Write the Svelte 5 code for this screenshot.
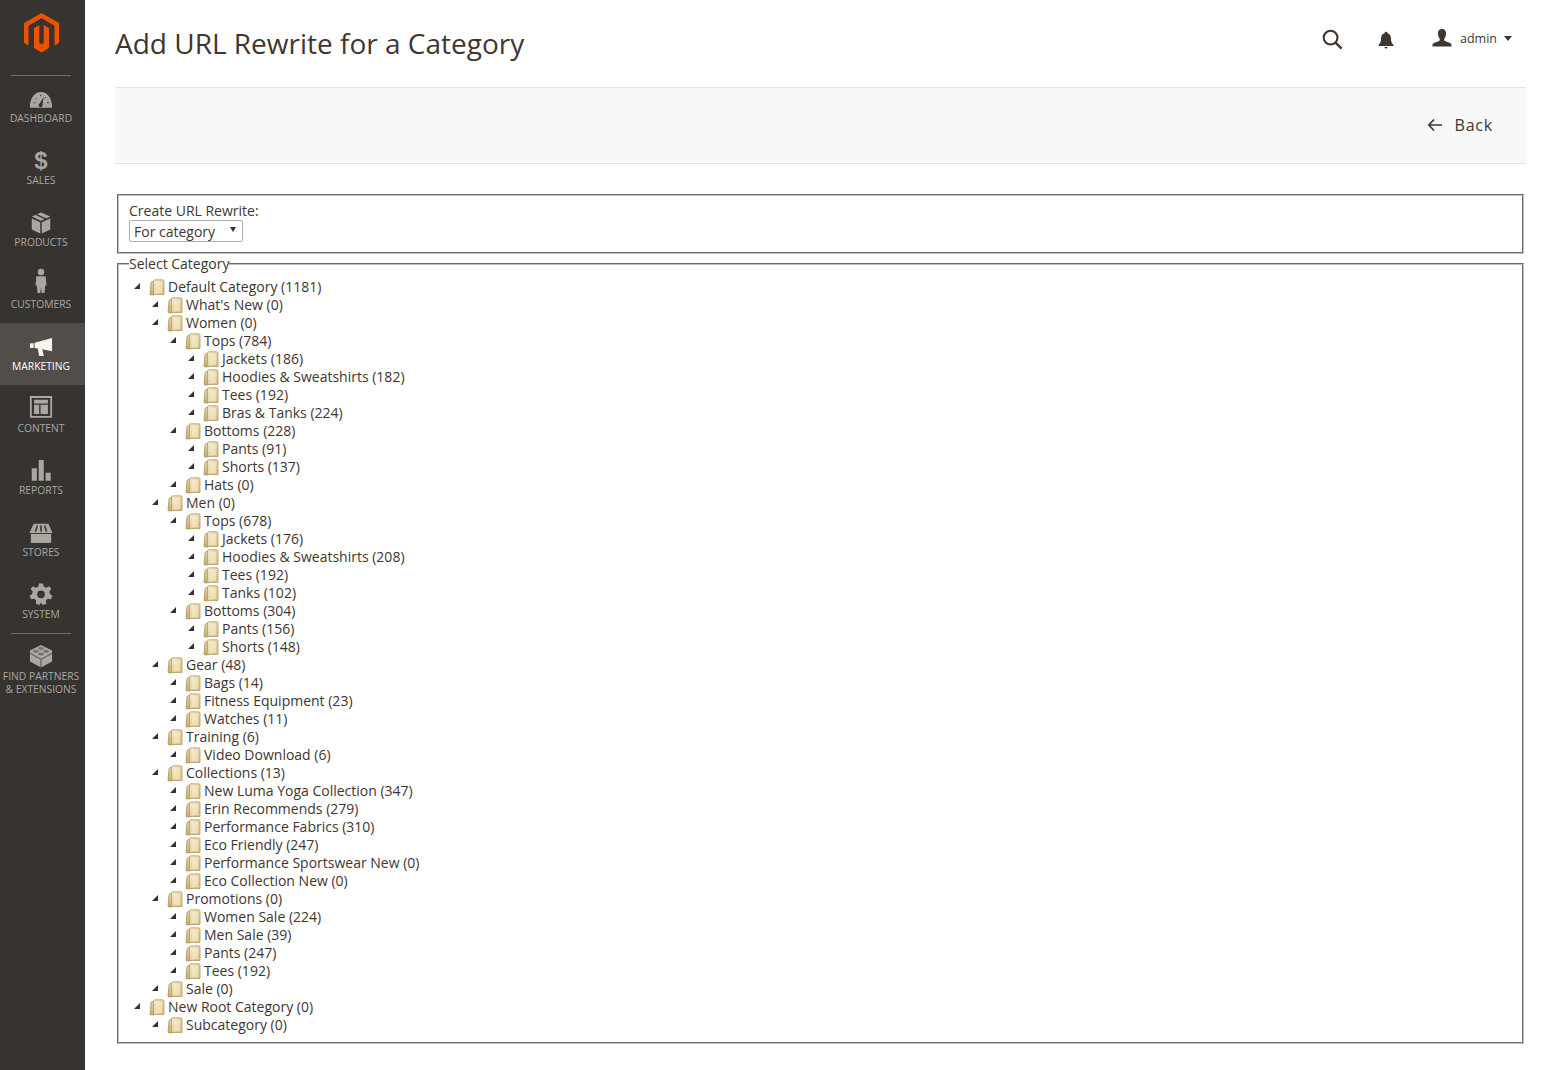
<script>
  const n = (label, ...kids) => ({ label, kids });

  const tree = [
    n('Default Category (1181)',
      n("What's New (0)"),
      n('Women (0)',
        n('Tops (784)', n('Jackets (186)'), n('Hoodies & Sweatshirts (182)'), n('Tees (192)'), n('Bras & Tanks (224)')),
        n('Bottoms (228)', n('Pants (91)'), n('Shorts (137)')),
        n('Hats (0)')),
      n('Men (0)',
        n('Tops (678)', n('Jackets (176)'), n('Hoodies & Sweatshirts (208)'), n('Tees (192)'), n('Tanks (102)')),
        n('Bottoms (304)', n('Pants (156)'), n('Shorts (148)'))),
      n('Gear (48)', n('Bags (14)'), n('Fitness Equipment (23)'), n('Watches (11)')),
      n('Training (6)', n('Video Download (6)')),
      n('Collections (13)',
        n('New Luma Yoga Collection (347)'), n('Erin Recommends (279)'), n('Performance Fabrics (310)'),
        n('Eco Friendly (247)'), n('Performance Sportswear New (0)'), n('Eco Collection New (0)')),
      n('Promotions (0)', n('Women Sale (224)'), n('Men Sale (39)'), n('Pants (247)'), n('Tees (192)')),
      n('Sale (0)')),
    n('New Root Category (0)', n('Subcategory (0)'))
  ];

  const menu = [
    { id: 'dashboard', label: 'Dashboard' },
    { id: 'sales', label: 'Sales' },
    { id: 'products', label: 'Products' },
    { id: 'customers', label: 'Customers' },
    { id: 'marketing', label: 'Marketing', active: true },
    { id: 'content', label: 'Content' },
    { id: 'reports', label: 'Reports' },
    { id: 'stores', label: 'Stores' },
    { id: 'system', label: 'System' }
  ];
</script>

{#snippet icon(id)}
  <svg class="nav-icon" viewBox="0 0 26 26" aria-hidden="true">
    {#if id === 'dashboard'}
      <path fill-rule="evenodd" d="M1 22.5 C1 12 6 5.5 13 5.5 C20 5.5 25 12 25 22.5 Z M16 10.5 L11.8 17.5 A2.2 2.2 0 1 0 14.6 18.6 Z" />
      <path d="M5 17h2M7.5 12l1 1M12.5 8.5v1.5M18.5 11l-1 1.2M19.5 17h2" stroke="#373330" stroke-width="1" />
    {:else if id === 'sales'}
      <text x="13" y="22" class="dollar" text-anchor="middle">$</text>
    {:else if id === 'products'}
      <path d="M13 1.5 L23 6 L13 10.5 L3 6 Z" />
      <path d="M3 8 L12.2 12.1 V24.5 L3 20 Z M23 8 L13.8 12.1 V24.5 L23 20 Z" />
      <path d="M8 3.9 L18 8.5" stroke="#373330" stroke-width="1.6" />
    {:else if id === 'customers'}
      <circle cx="13" cy="-1" r="3.5" />
      <path d="M8 3.6 H18 L19 13.5 H17.5 L16.8 21.7 H13.8 L13 16 L12.2 21.7 H9.2 L8.5 13.5 H7 Z" />
    {:else if id === 'marketing'}
      <path d="M6 8.5 L25 3.3 V17.5 L14.5 15.5 L16 22.7 H11 L9.5 14.5 L6 14 Z" />
      <rect x="1" y="9" width="4" height="5" />
    {:else if id === 'content'}
      <path fill-rule="evenodd" d="M1 -1 H25 V22.5 H1 Z M3 1 V20.5 H23 V1 Z" />
      <path d="M5.5 3 H20.5 V7 H5.5 Z M5.5 8.5 H11 V18.5 H5.5 Z M12.5 8.5 H20.5 V18.5 H12.5 Z" />
    {:else if id === 'reports'}
      <path d="M3 10 H8.5 V23.5 H3 Z M10.5 1 H16 V23.5 H10.5 Z M18 15 H23.5 V23.5 H18 Z" />
    {:else if id === 'stores'}
      <path d="M5 3 H21 L25.5 13 L0.5 13 Z" />
      <path d="M9 5 L7 11.5 M13 5 V11.5 M17 5 L19 11.5" stroke="#373330" stroke-width="1.7" />
      <path d="M2 14 H24 V23.8 H2 Z" />
    {:else if id === 'system'}
      <path fill-rule="evenodd" d="M10.8 .5 H15.2 L16 4 L18.7 5.2 L21.8 3.4 L24.3 6.6 L22 9.2 L22.6 12 L25.5 14 L23.6 17.7 L20.2 17 L18.2 19.2 L18.6 22.6 L14.8 23.8 L13 21 L11.2 23.8 L7.4 22.6 L7.8 19.2 L5.8 17 L2.4 17.7 L0.5 14 L3.4 12 L4 9.2 L1.7 6.6 L4.2 3.4 L7.3 5.2 L10 4 Z M13 8 A4.2 4.2 0 1 0 13 16.4 A4.2 4.2 0 1 0 13 8 Z" />
    {/if}
  </svg>
{/snippet}

{#snippet branch(nodes)}
  <ul class="tree">
    {#each nodes as node}
      <li>
        <div class="node">
          <span class="arrow"></span>
          <svg class="folder" viewBox="0 0 16 17" aria-hidden="true">
            <path d="M1 15.5 L2 4 Q2.2 2.5 4 2.5 H6 V15.5 Q3 16.5 1 15.5 Z" fill="url(#folder-back)" stroke="#a8925c" stroke-width=".8" />
            <path d="M4.5 2 Q4.6 .8 6 .8 H13.5 Q15 .8 15 2.2 V15.5 H4.5 Z" fill="url(#folder-front)" stroke="#b39c66" stroke-width=".8" />
            <path d="M7 3 H13 V14 H7 Z" fill="#f8efd2" opacity=".55" />
          </svg>
          <span class="node-label">{node.label}</span>
        </div>
        {#if node.kids.length}
          {@render branch(node.kids)}
        {/if}
      </li>
    {/each}
  </ul>
{/snippet}

<svg class="defs" width="0" height="0" aria-hidden="true">
  <defs>
    <linearGradient id="folder-back" x1="0" y1="0" x2="0" y2="1">
      <stop offset="0" stop-color="#e6d6a8" />
      <stop offset="1" stop-color="#c8aa68" />
    </linearGradient>
    <linearGradient id="folder-front" x1="0" y1="0" x2="1" y2="1">
      <stop offset="0" stop-color="#f4ecd0" />
      <stop offset="1" stop-color="#d8bd7c" />
    </linearGradient>
  </defs>
</svg>

<div class="page">
  <nav class="sidebar">
    <a class="logo" href="#top" aria-label="Magento">
      <svg viewBox="0 0 35 40" width="35" height="40">
        <path d="M17.5 0 L35 10 V30 L30.5 32.6 V12.7 L17.5 5.2 L4.5 12.7 V32.6 L0 30 V10 Z" />
        <path d="M10 15 L15.3 12 V30 L17.5 31.3 L19.7 30 V12 L25 15 V35 L17.5 39.5 L10 35 Z" />
      </svg>
    </a>
    <ul class="menu">
      {#each menu as item}
        <li class="item" class:active={item.active}>
          {@render icon(item.id)}
          <span>{item.label}</span>
        </li>
      {/each}
      <li class="item partners">
        <svg class="nav-icon" viewBox="0 0 26 26" aria-hidden="true">
          <path d="M13 0 L25 6 V18 L13 24.5 L1 18 V6 Z" />
          <ellipse cx="13" cy="3.8" rx="3.2" ry="1.5" fill="#373330" opacity=".45" />
          <ellipse cx="7.5" cy="6.8" rx="3.2" ry="1.5" fill="#373330" opacity=".45" />
          <ellipse cx="18.5" cy="6.8" rx="3.2" ry="1.5" fill="#373330" opacity=".45" />
          <ellipse cx="13" cy="9.8" rx="3.2" ry="1.5" fill="#373330" opacity=".45" />
          <path d="M1 9 L13 15.5 L25 9 M13 15.5 V24.5" fill="none" stroke="#373330" stroke-width=".8" />
        </svg>
        <span>Find Partners<br />&amp; Extensions</span>
      </li>
    </ul>
  </nav>

  <main class="main">
    <header class="header">
      <h1>Add URL Rewrite for a Category</h1>
      <div class="actions">
        <svg class="search" viewBox="0 0 22 22" aria-hidden="true">
          <circle cx="9" cy="9" r="7.2" fill="none" stroke="#41362f" stroke-width="2.2" />
          <path d="M14.2 14.2 L20.5 20.5" stroke="#41362f" stroke-width="2.6" />
        </svg>
        <svg class="bell" viewBox="0 0 16 18" aria-hidden="true">
          <path d="M8 0.8 C9 .8 9.5 1.5 9.5 2.3 C12 3 13 5 13 8 C13 11 14 12.5 15.5 14 V15 H.5 V14 C2 12.5 3 11 3 8 C3 5 4 3 6.5 2.3 C6.5 1.5 7 .8 8 .8 Z" />
          <path d="M6.5 16 H9.5 A1.5 1.5 0 0 1 6.5 16 Z" />
        </svg>
        <div class="user">
          <svg class="avatar" viewBox="0 0 20 18" aria-hidden="true">
            <path d="M10 0 C13 0 14.2 2.2 14 5 C13.9 7 13.2 8.6 12.3 9.8 V11.5 C14 13 19 13.5 19.5 15.5 V17.5 H.5 V15.5 C1 13.5 6 13 7.7 11.5 V9.8 C6.8 8.6 6.1 7 6 5 C5.8 2.2 7 0 10 0 Z" />
          </svg>
          <span>admin</span>
          <i class="caret"></i>
        </div>
      </div>
    </header>

    <div class="toolbar">
      <button class="back" type="button">
        <svg viewBox="0 0 16 14" aria-hidden="true">
          <path d="M7 1.5 L1.8 7 L7 12.5 M2 7 H15" fill="none" stroke="#41362f" stroke-width="1.7" />
        </svg>
        Back
      </button>
    </div>

    <div class="content">
      <fieldset class="box create">
        <label for="rewrite-type">Create URL Rewrite:</label>
        <span class="select-wrap">
          <select id="rewrite-type">
            <option>For category</option>
          </select>
        </span>
      </fieldset>

      <fieldset class="box categories">
        <legend>Select Category</legend>
        {@render branch(tree)}
      </fieldset>
    </div>
  </main>
</div>

<style>
  :global(body) {
    margin: 0;
    background: #fff;
    color: #303030;
    font-family: "Open Sans", "Liberation Sans", sans-serif;
  }

  .defs {
    position: absolute;
  }

  .page {
    display: flex;
    min-height: 1070px;
  }

  .sidebar {
    flex: 0 0 85px;
    background: #373330;
    box-sizing: border-box;
    padding-top: 13px;
  }

  .logo {
    display: block;
    height: 40px;
    margin: 0 26px 22px 24px;
  }

  .logo svg {
    display: block;
    fill: #eb5202;
  }

  .menu {
    list-style: none;
    margin: 0;
    padding: 0;
  }

  .menu::before {
    content: "";
    display: block;
    height: 1px;
    margin: 0 14px -1px 11px;
    background: #736e6b;
  }

  .item {
    display: flex;
    flex-direction: column;
    align-items: center;
    height: 62px;
    box-sizing: border-box;
    padding: 12px 3px 0 0;
    color: #aaa6a0;
    font-size: 10.3px;
    line-height: 13px;
    text-transform: uppercase;
    text-align: center;
    white-space: nowrap;
  }

  .item.active {
    background: #524d49;
    color: #fff;
  }

  .item.partners {
    position: relative;
    height: 70px;
  }

  .item.partners::before {
    content: "";
    position: absolute;
    top: 0;
    left: 11px;
    width: 60px;
    height: 1px;
    background: #736e6b;
  }

  .nav-icon {
    display: block;
    width: 24px;
    height: 24px;
    margin-bottom: 1px;
    overflow: visible;
    fill: #aaa6a0;
  }

  .active .nav-icon {
    fill: #f7f3eb;
  }

  .dollar {
    font-family: "Liberation Sans", sans-serif;
    font-size: 26px;
    font-weight: 700;
  }

  .main {
    flex: 1;
    min-width: 0;
    padding: 0 27px 0 30px;
  }

  .header {
    display: flex;
    justify-content: space-between;
    height: 87px;
  }

  h1 {
    margin: 24px 0 0;
    font-size: 28px;
    line-height: 38px;
    font-weight: 400;
    color: #41362f;
  }

  .actions {
    display: flex;
    align-items: flex-start;
    padding-top: 29px;
  }

  .search {
    width: 21px;
    height: 21px;
    margin-right: 35px;
  }

  .bell {
    width: 16px;
    height: 18px;
    margin: 2px 0 0;
    fill: #41362f;
  }

  .user {
    display: flex;
    align-items: center;
    margin: 0 14px 0 38px;
    height: 18px;
    font-size: 12.5px;
    color: #41362f;
  }

  .avatar {
    width: 20px;
    height: 18px;
    margin-right: 8px;
    fill: #41362f;
  }

  .caret {
    width: 0;
    height: 0;
    margin-left: 7px;
    border: 4px solid transparent;
    border-top: 5px solid #41362f;
    border-bottom: 0;
  }

  .toolbar {
    display: flex;
    justify-content: flex-end;
    align-items: center;
    height: 77px;
    box-sizing: border-box;
    padding: 0 33px 1px 0;
    background: #f8f8f8;
    border-top: 1px solid #e3e3e3;
    border-bottom: 1px solid #e3e3e3;
  }

  .back {
    display: flex;
    align-items: center;
    gap: 12px;
    padding: 0;
    border: 0;
    background: none;
    font: 500 16px/22px "Open Sans", sans-serif;
    letter-spacing: 0.8px;
    color: #41362f;
  }

  .back svg {
    width: 16px;
    height: 14px;
  }

  .content {
    padding: 30px 2px 0;
  }

  .box {
    margin: 0;
    min-width: 0;
    border: 2px groove #c0c0c0;
    font-size: 14px;
    line-height: 18px;
    color: #41362f;
  }

  .create {
    height: 60px;
    box-sizing: border-box;
    padding: 6px 10px 0;
  }

  .create label {
    display: block;
    line-height: 18px;
  }

  .select-wrap {
    position: relative;
    display: block;
    width: 114px;
  }

  .select-wrap::after {
    content: "";
    position: absolute;
    top: 7px;
    right: 7px;
    border: 3px solid transparent;
    border-top: 5px solid #333;
    border-bottom: 0;
  }

  select {
    display: block;
    width: 114px;
    height: 22px;
    padding: 0 0 0 4px;
    border: 1px solid #adadad;
    border-radius: 2px;
    background: #fff;
    appearance: none;
    font: 14px "Open Sans", sans-serif;
    color: #41362f;
  }

  .categories {
    padding: 6px 10px 8px;
  }

  legend {
    padding: 1px 0 0;
    margin-bottom: -1px;
    line-height: 18px;
  }

  .tree {
    list-style: none;
    margin: 0;
    padding: 0 0 0 18px;
  }

  .categories > .tree {
    padding-left: 0;
  }

  .node {
    display: flex;
    align-items: center;
    height: 18px;
    white-space: nowrap;
  }

  .arrow {
    width: 0;
    height: 0;
    margin: 0 9px 2px 5px;
    border-left: 6px solid transparent;
    border-bottom: 6px solid #333;
  }

  .folder {
    flex: none;
    width: 16px;
    height: 17px;
    margin-right: 3px;
  }
</style>
